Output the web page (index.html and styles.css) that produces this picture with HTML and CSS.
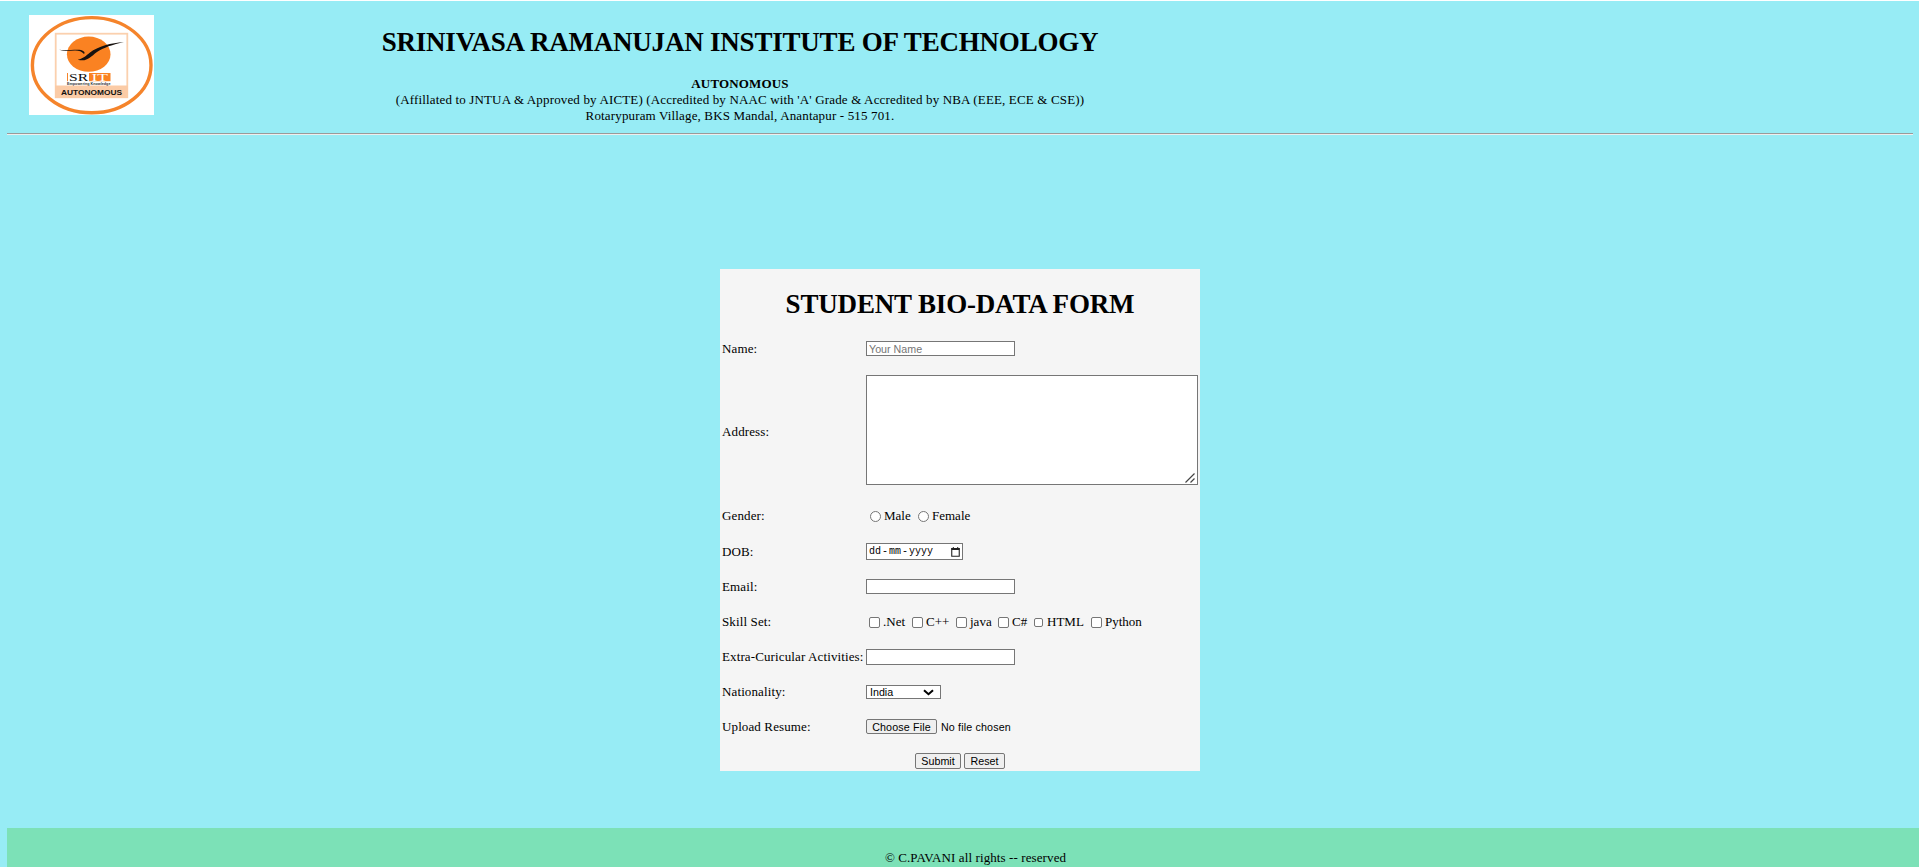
FILE: index.html
```html
<!DOCTYPE html>
<html lang="en">
<head>
<meta charset="utf-8">
<title>Student Bio-Data Form</title>
<link rel="stylesheet" href="styles.css">
</head>
<body>
<header class="header">
  <svg class="logo" viewBox="0 0 125 100" role="img" aria-label="SRIT Autonomous">
    <rect width="125" height="100" fill="#fff"/>
    <ellipse cx="62.7" cy="50.2" rx="59.3" ry="47.6" fill="none" stroke="#f5842b" stroke-width="3.4"/>
    <rect x="26.7" y="18.7" width="71.6" height="63.6" fill="none" stroke="#fbd0ae" stroke-width="1.8"/>
    <rect x="26" y="70.5" width="73" height="12.5" fill="#fbcba6"/>
    <ellipse cx="59.7" cy="39.2" rx="21.8" ry="17.6" fill="#fa8222"/>
    <path d="M30 34.7C36 36 47 34 52 35C55.5 36 56.3 38 55 39C53 36.5 50 35.5 46 35.5C40 36 35 36.3 30 34.7ZM49 44.5C54 44 57 40.5 61 37.5C69 31.5 82 27.8 95 27.3C84 29.3 74 33 68 37C62 41.5 59 45.5 53 45.3C50 45.3 49 45 49 44.5Z" fill="#17120f"/>
    <path d="M38.5 58V66.2" stroke="#f5842b" stroke-width="1"/>
    <rect x="60" y="58" width="21.5" height="8.2" fill="#fa8222"/>
    <text class="logo-mark" x="40" y="65.5" textLength="19" lengthAdjust="spacingAndGlyphs">SR</text>
    <text class="logo-mark logo-mark-light" x="62.5" y="65.5" textLength="16.5" lengthAdjust="spacingAndGlyphs">IT</text>
    <text class="logo-tag" x="38" y="69.6" textLength="43.5" lengthAdjust="spacingAndGlyphs">Empowering Knowledge</text>
    <text class="logo-name" x="32" y="79.8" textLength="61" lengthAdjust="spacingAndGlyphs">AUTONOMOUS</text>
  </svg>
  <div class="heading">
    <h1 class="institute">SRINIVASA RAMANUJAN INSTITUTE OF TECHNOLOGY</h1>
    <div><b>AUTONOMOUS</b></div>
    <div>(Affillated to JNTUA &amp; Approved by AICTE) (Accredited by NAAC with 'A' Grade &amp; Accredited by NBA (EEE, ECE &amp; CSE))</div>
    <div>Rotarypuram Village, BKS Mandal, Anantapur - 515 701.</div>
  </div>
</header>
<main class="main">
  <form class="form">
    <h1 class="title">STUDENT BIO-DATA FORM</h1>
    <div class="row"><label>Name:</label><input class="text" type="text" placeholder="Your Name"></div>
    <div class="row row-address"><label class="address">Address:</label>
      <div class="area-wrap"><textarea class="area"></textarea><svg class="grip" viewBox="0 0 10 10"><path d="M.5 9.5L9.5.5M5.5 9.5L9.5 5.5" fill="none" stroke="#444" stroke-width="1.2"/></svg></div></div>
    <div class="row row-gender"><label>Gender:</label>
      <div class="choices"><label class="choice male"><input class="radio" type="radio" name="g">Male</label><label class="choice"><input class="radio" type="radio" name="g">Female</label></div></div>
    <div class="row"><label>DOB:</label>
      <div class="date"><span>dd</span><span class="dash">-</span><span>mm</span><span class="dash">-</span><span>yyyy</span>
        <svg class="cal" viewBox="0 0 9 10"><path d="M.75 1.5h7.5v7.7H.75z" fill="none" stroke="#222" stroke-width="1.1"/><path d="M.5 1h8v2h-8zM1.8 0h1v1h-1zM6.2 0h1v1h-1z" fill="#222"/></svg></div></div>
    <div class="row"><label>Email:</label><input class="text" type="text"></div>
    <div class="row row-skill"><label>Skill Set:</label>
      <div class="choices">
        <label class="choice net"><input class="check" type="checkbox">.Net</label>
        <label class="choice cpp"><input class="check" type="checkbox">C++</label>
        <label class="choice java"><input class="check" type="checkbox">java</label>
        <label class="choice cs"><input class="check" type="checkbox">C#</label>
        <label class="choice html"><input class="check check-small" type="checkbox">HTML</label>
        <label class="choice"><input class="check" type="checkbox">Python</label>
      </div></div>
    <div class="row row-extra"><label>Extra-Curicular Activities:</label><input class="text text-tall" type="text"></div>
    <div class="row row-skill"><label>Nationality:</label>
      <div class="select"><span>India</span><svg class="chevron" viewBox="0 0 11 7"><path d="M1 1.2L5.5 5.2L10 1.2" fill="none" stroke="#000" stroke-width="2"/></svg></div></div>
    <div class="row row-upload"><label>Upload Resume:</label>
      <div class="file"><button class="btn choose" type="button">Choose File</button><span>No file chosen</span></div></div>
    <div class="actions"><button class="btn submit" type="button">Submit</button><button class="btn reset" type="reset">Reset</button></div>
  </form>
</main>
<footer class="footer"><span>© C.PAVANI all rights -- reserved</span></footer>
</body>
</html>
```
FILE: styles.css
```css
* { box-sizing: border-box; }
html { background: #97ecf5; }
body {
  margin: 0;
  height: 867px;
  overflow: hidden;
  display: flex;
  flex-direction: column;
  border-top: 1px solid #fff;
  font: 13px/16px "Liberation Serif", "Times New Roman", serif;
  color: #000;
}
h1 { margin: 0; font-weight: bold; white-space: nowrap; }
.header {
  display: flex;
  height: 134px;
  margin: 0 6px 0 7px;
  padding: 14px 0 0 22px;
  border-bottom: 1px solid #eee;
  box-shadow: inset 0 -1px #9a9a9a;
}
.logo { width: 125px; height: 100px; flex: none; }
.logo-mark { font: 10px "Liberation Serif", serif; fill: #111; }
.logo-mark-light { fill: #fff; }
.logo-tag { font: bold 3.6px "Liberation Sans", sans-serif; fill: #333; }
.logo-name { font: bold 8px "Liberation Sans", sans-serif; fill: #111; }
.heading { width: 720px; margin-left: 226px; text-align: center; white-space: nowrap; letter-spacing: 0.15px; }
.institute { font-size: 27px; line-height: 32px; margin: 11px 0 18px; letter-spacing: -0.21px; }
.main { display: flex; justify-content: center; height: 693px; padding: 134px 0 0 1px; }
.form { width: 480px; height: 502px; background: #f5f5f5; }
.title { height: 62px; padding-top: 19px; font-size: 27px; line-height: 32px; text-align: center; letter-spacing: -0.18px; }
.row { display: grid; grid-template-columns: 144px 1fr; align-items: center; height: 35px; padding-left: 2px; white-space: nowrap; }
.row > label { letter-spacing: 0.12px; }
.row-address { height: 128px; }
.address { padding-top: 3px; }
.row-gender { height: 40px; padding-top: 4px; }
.row-skill { height: 36px; }
.row-extra { height: 34px; }
.row-upload { height: 33px; }
.text, .area, .date, .select { border: 1px solid #767676; background: #fff; border-radius: 0; margin: 0; }
.text { width: 149px; height: 15px; padding: 0 2px; font: 10.7px "Liberation Sans", Arial, sans-serif; }
.text::placeholder { color: #757575; }
.text-tall { height: 16px; }
.area-wrap { position: relative; width: 332px; height: 110px; }
.area { width: 332px; height: 110px; display: block; resize: none; }
.grip { position: absolute; right: 3px; bottom: 2px; width: 10px; height: 10px; }
.choices { display: flex; }
.choice { display: flex; align-items: center; }
.radio, .check { appearance: none; flex: none; margin: 0; border: 1px solid #767676; background: #fff; }
.radio { width: 11px; height: 11px; border-radius: 50%; margin: 0 3px 0 4px; }
.male { width: 48px; }
.check { width: 11px; height: 11px; border-radius: 2px; margin: 0 3px; }
.check-small { width: 9px; height: 9px; margin: 0 4px 0 3px; }
.net { width: 43px; }
.cpp { width: 44px; }
.java { width: 42px; }
.cs { width: 36px; }
.html { width: 57px; }
.date { display: flex; align-items: center; width: 97px; height: 17px; padding: 0 2px; font: 10px "Liberation Mono", monospace; }
.dash { width: 8px; text-align: center; }
.cal { width: 9px; height: 10px; margin-left: auto; }
.select { display: flex; align-items: center; justify-content: space-between; width: 75px; height: 14px; padding: 0 6px 0 3px; font: 10.7px "Liberation Sans", Arial, sans-serif; }
.chevron { width: 11px; height: 7px; }
.file { display: flex; align-items: center; font: 10.7px "Liberation Sans", Arial, sans-serif; letter-spacing: 0.15px; }
.btn { height: 15px; padding: 0; border: 1px solid #767676; border-radius: 2px; background: #efefef; color: #000; font: 10.7px "Liberation Sans", Arial, sans-serif; line-height: 13px; }
.choose { width: 71px; margin-right: 4px; padding-top: 1px; letter-spacing: 0.15px; }
.actions { display: flex; justify-content: center; align-items: flex-end; gap: 3px; height: 28px; padding-bottom: 2px; }
.submit { width: 46px; height: 16px; }
.reset { width: 41px; height: 16px; }
.footer { flex: none; height: 39px; margin-left: 7px; padding: 22px 0 0 25px; background: #7ce1b7; text-align: center; letter-spacing: 0.1px; }
```
